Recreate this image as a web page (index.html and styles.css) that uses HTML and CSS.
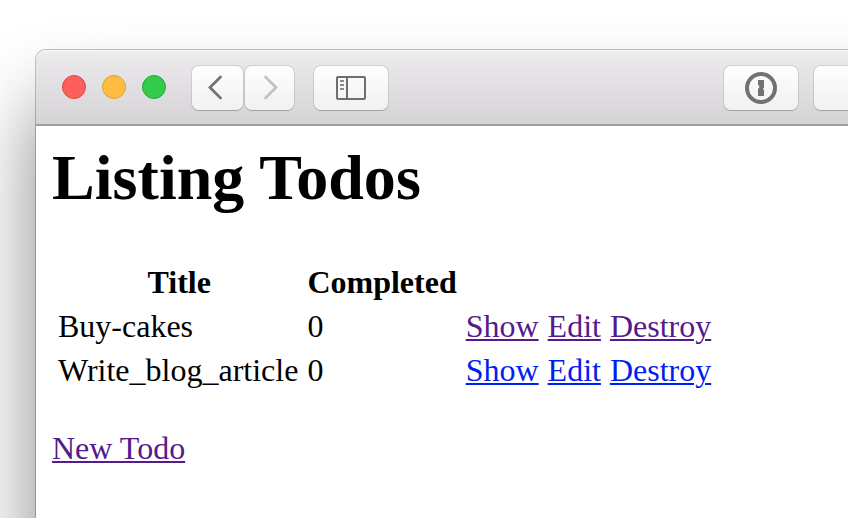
FILE: index.html
```html
<!DOCTYPE html>
<html lang="en">
<head>
<meta charset="utf-8">
<title>Todos</title>
<link rel="stylesheet" href="styles.css">
</head>
<body>
<div class="window">
  <header class="toolbar">
    <div class="lights">
      <span class="light close"></span>
      <span class="light minimize"></span>
      <span class="light zoom"></span>
    </div>
    <div class="nav">
      <button class="btn back" aria-label="Back"><svg width="16" height="26" viewBox="0 0 16 26"><path d="M13.500 2 3 12.500 13.500 23" fill="none" stroke="#757575" stroke-width="2.800" stroke-linecap="round"/></svg></button>
      <button class="btn forward" aria-label="Forward"><svg width="16" height="26" viewBox="0 0 16 26"><path d="M2.500 2 13 12.500 2.500 23" fill="none" stroke="#c2c2c2" stroke-width="2.800" stroke-linecap="round"/></svg></button>
    </div>
    <button class="btn sidebar" aria-label="Sidebar"><svg width="30" height="24" viewBox="0 0 30 24"><rect x="1" y="1" width="28" height="22" rx="1" fill="none" stroke="#6e6e6e" stroke-width="2"/><path d="M11 1v22" stroke="#6e6e6e" stroke-width="2"/><path d="M4 5h4M4 9h4M4 13h4" stroke="#8b8b8b" stroke-width="2"/></svg></button>
    <button class="btn password" aria-label="Passwords"><svg width="32" height="32" viewBox="0 0 32 32"><circle cx="16" cy="16" r="14" fill="none" stroke="#727272" stroke-width="4"/><path d="M13 8h6v7.500l-1 1.300 1 1.300V24h-6v-7l1.200-1.200V14L13 12.800z" fill="#727272"/></svg></button>
    <button class="btn extra" aria-label="Extension"></button>
  </header>
  <main class="page">
    <h1>Listing Todos</h1>
    <table>
      <thead>
        <tr><th class="title">Title</th><th>Completed</th><th colspan="3"></th></tr>
      </thead>
      <tbody>
        <tr><td>Buy-cakes</td><td>0</td><td><a class="visited" href="#">Show</a></td><td><a class="visited" href="#">Edit</a></td><td><a class="visited" href="#">Destroy</a></td></tr>
        <tr><td>Write_blog_article</td><td>0</td><td><a href="#">Show</a></td><td><a href="#">Edit</a></td><td><a href="#">Destroy</a></td></tr>
      </tbody>
    </table>
    <a class="visited" href="#">New Todo</a>
  </main>
</div>
</body>
</html>
```

FILE: styles.css
```css
* { box-sizing: border-box; }
html { overflow: hidden; }
body {
  margin: 0;
  height: 518px;
  padding: 50px 0 0 36px;
  overflow: hidden;
  background: #fff;
}
.window {
  width: 1400px;
  height: 1000px;
  border-radius: 10px;
  background: #fff;
  box-shadow: 0 0 0 1px rgba(0, 0, 0, .23), 0 54px 80px rgba(0, 0, 0, .48);
}
.toolbar {
  display: flex;
  height: 76px;
  padding: 16px 0 0 26px;
  border-bottom: 2px solid #a09ea1;
  border-radius: 10px 10px 0 0;
  background: linear-gradient(#edebee, #d5d3d6);
  box-shadow: inset 0 2px 0 rgba(255, 255, 255, .4);
}
.lights {
  display: flex;
  gap: 16px;
  width: 130px;
  padding-top: 9px;
}
.light {
  width: 24px;
  height: 24px;
  border: 1px solid;
  border-radius: 50%;
}
.close { background: #fd605c; border-color: #e04744; }
.minimize { background: #febd42; border-color: #de9f35; }
.zoom { background: #34ca4a; border-color: #24aa36; }
.nav { display: flex; gap: 2px; }
.btn {
  display: flex;
  align-items: center;
  justify-content: center;
  flex: none;
  height: 44px;
  padding: 0;
  border: 0;
  border-radius: 7px;
  background: linear-gradient(#fefefe, #f1f1f1);
  box-shadow: 0 0 0 1px rgba(0, 0, 0, .1), 0 1px 0 rgba(0, 0, 0, .17);
}
.back { width: 51px; padding-right: 5px; }
.forward { width: 49px; padding-left: 3px; }
.sidebar { width: 74px; margin-left: 20px; }
.password { width: 74px; margin-left: 336px; }
.extra { width: 74px; margin-left: 16px; }
.page {
  padding: 16px;
  color: #000;
  font: 32px/36px "Liberation Serif", "Times New Roman", serif;
}
h1 { margin: 0 0 44px; font-size: 64px; line-height: 72px; letter-spacing: .05px; }
table { margin-bottom: 36px; border-spacing: 4px; }
th, td { padding: 2px 3px 2px 2px; height: 40px; white-space: nowrap; }
.title { padding-left: 4px; }
a {
  color: #001eee;
  text-decoration-thickness: 2px;
  text-underline-offset: 2px;
}
.visited { color: #551a8b; }
```
